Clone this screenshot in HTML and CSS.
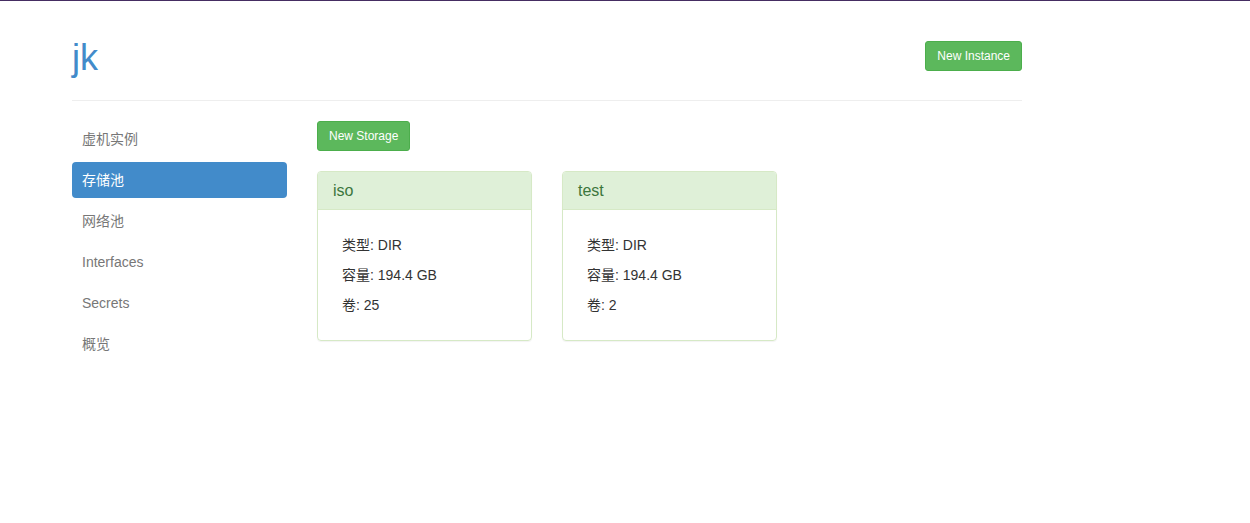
FILE: index.html
```html
<!DOCTYPE html>
<html lang="en">
<head>
  <meta charset="UTF-8">
  <title>jk - Storage</title>
  <link rel="stylesheet" href="styles.css">
</head>
<body>

  <div class="container">
    <!-- Page header -->
    <div class="page-header">
      <h1>jk</h1>
      <button type="button" class="btn btn-success">New Instance</button>
    </div>

    <div class="row">
      <!-- Side navigation -->
      <ul class="nav-pills">
        <li><a href="#">虚机实例</a></li>
        <li class="active"><a href="#">存储池</a></li>
        <li><a href="#">网络池</a></li>
        <li><a href="#">Interfaces</a></li>
        <li><a href="#">Secrets</a></li>
        <li><a href="#">概览</a></li>
      </ul>

      <!-- Storage pools -->
      <div class="main">
        <div class="toolbar">
          <button type="button" class="btn btn-success">New Storage</button>
        </div>

        <div class="pools">
          <div class="panel">
            <div class="panel-heading">iso</div>
            <div class="panel-body">
              <p>类型: DIR</p>
              <p>容量: 194.4 GB</p>
              <p>卷: 25</p>
            </div>
          </div>

          <div class="panel">
            <div class="panel-heading">test</div>
            <div class="panel-body">
              <p>类型: DIR</p>
              <p>容量: 194.4 GB</p>
              <p>卷: 2</p>
            </div>
          </div>
        </div>
      </div>
    </div>
  </div>

</body>
</html>
```

FILE: styles.css
```css
/* Base */
body {
  margin: 0;
  border-top: 1px solid #452d62;
  font-family: "Liberation Sans", Arial, "Noto Sans CJK SC", sans-serif;
  font-size: 14px;
  color: #333;
  background-color: #fff;
}

.container {
  width: 950px;
  margin-left: 72px;
}

/* Header */
.page-header {
  display: flex;
  justify-content: space-between;
  align-items: flex-start;
  height: 100px;
  border-bottom: 1px solid #eee;
  box-sizing: border-box;
}

.page-header h1 {
  margin: 37px 0 0;
  font-size: 36px;
  font-weight: normal;
  line-height: 40px;
  color: #428bca;
}

.page-header .btn {
  margin-top: 40px;
}

/* Buttons */
.btn {
  height: 30px;
  padding: 0 11px;
  font-family: inherit;
  font-size: 12px;
  line-height: 28px;
  border: 1px solid transparent;
  border-radius: 3px;
  cursor: pointer;
}

.btn-success {
  color: #fff;
  background-color: #5cb85c;
  border-color: #4cae4c;
}

/* Layout */
.row {
  display: flex;
  gap: 30px;
  padding-top: 20px;
}

/* Side navigation */
.nav-pills {
  width: 215px;
  margin: 0;
  padding: 0;
  list-style: none;
}

.nav-pills li {
  margin-bottom: 5px;
}

.nav-pills a {
  display: block;
  padding: 8px 10px;
  line-height: 20px;
  color: #777;
  text-decoration: none;
  border-radius: 4px;
}

.nav-pills li.active a {
  color: #fff;
  background-color: #428bca;
}

/* Main column */
.main {
  flex: 1;
}

.toolbar {
  margin-bottom: 20px;
}

.pools {
  display: flex;
  gap: 30px;
}

.panel {
  width: 215px;
  border: 1px solid #d6e9c6;
  border-radius: 4px;
  box-shadow: 0 1px 1px rgba(0, 0, 0, 0.05);
  box-sizing: border-box;
}

.panel-heading {
  height: 38px;
  padding: 0 15px;
  font-size: 16px;
  line-height: 38px;
  color: #3c763d;
  background-color: #dff0d8;
  border-bottom: 1px solid #d6e9c6;
  border-radius: 3px 3px 0 0;
  box-sizing: border-box;
}

.panel-body {
  padding: 20px 24px 20px;
}

.panel-body p {
  margin: 0;
  line-height: 30px;
}
```
